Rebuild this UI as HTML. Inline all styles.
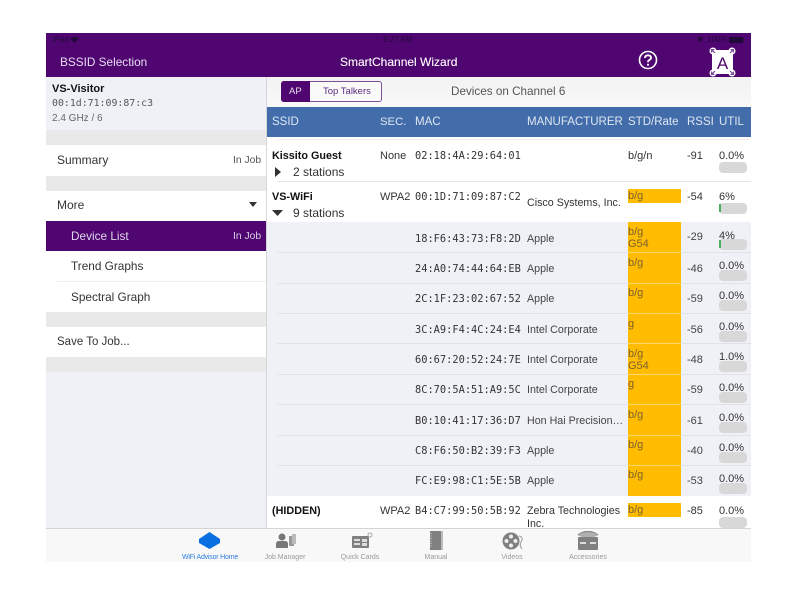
<!DOCTYPE html>
<html><head><meta charset="utf-8"><style>
html,body{margin:0;padding:0;background:#fff;width:800px;height:600px;overflow:hidden}
body{font-family:"Liberation Sans",sans-serif;color:#222;position:relative}
#a{position:absolute;left:46px;top:33px;width:705px;height:529px;overflow:hidden;background:#eff1f6}
.w{position:absolute;left:-46px;top:-33px;width:800px;height:600px;filter:blur(.35px)}
.b{position:absolute}
.t{position:absolute;white-space:nowrap;line-height:14px;font-size:11px}
.m{font-family:"DejaVu Sans Mono",monospace;font-size:10.350px;color:#333}
.n{font-size:10.700px}
.y{position:absolute;left:628px;width:53px;background:#ffbc00}
.s{color:#7a6230;font-size:11px}
.g{position:absolute;left:719px;width:28px;height:10.500px;background:#d8d8d8;border-radius:4px}
.l{position:absolute;height:1px;background:#e4e4e8}
.yl{position:absolute;left:628px;width:53px;height:1px;background:#ffd76a}
.tb{position:absolute;font-size:7px;color:#9a9a9a;white-space:nowrap;line-height:9px;text-align:center;width:80px;top:553px}
</style></head><body><div id="a"><div class="w">
<div class="b" style="left:46px;top:33px;width:705px;height:44px;background:#4f0670"></div>
<div class="t" style="left:53px;top:33px;font-size:8px;color:#240a3c">iPad</div>
<svg class="b" style="left:70px;top:36px" width="9" height="7" viewBox="0 0 9 7"><path d="M4.500 7L0 2.500Q4.500-1 9 2.500Z" fill="#240a3c"/></svg>
<div class="t" style="left:383px;top:33px;font-size:8px;color:#240a3c">8:27 AM</div>
<div class="t" style="left:697px;top:33px;font-size:8px;color:#240a3c">✱</div>
<div class="t" style="left:707px;top:33px;font-size:8px;color:#240a3c">100%</div>
<div class="b" style="left:729px;top:37px;width:14px;height:6px;background:#22083a"></div>
<div class="b" style="left:743px;top:39px;width:1px;height:2px;background:#22083a"></div>
<div class="t" style="left:60px;top:55px;font-size:11.800px;color:#e6dcef">BSSID Selection</div>
<div class="t" style="left:340px;top:55px;font-size:12px;color:#fff;-webkit-text-stroke:.1px #fff">SmartChannel Wizard</div>
<svg class="b" style="left:638px;top:50px" width="20" height="20" viewBox="0 0 20 20"><circle cx="10" cy="10" r="8.500" fill="none" stroke="#fff" stroke-width="1.600"/><path d="M7 8Q7 5.300 10 5.300Q13 5.300 13 7.800Q13 9.300 11 10.200Q10 10.700 10 12.200" fill="none" stroke="#fff" stroke-width="1.800"/><circle cx="10" cy="14.700" r="1.100" fill="#fff"/></svg>
<svg class="b" style="left:708px;top:46px" width="28" height="31" viewBox="0 0 28 31"><rect x="4" y="4" width="21" height="24" fill="#fff"/><g fill="#fff"><circle cx="5" cy="5" r="3.500"/><circle cx="24" cy="5" r="3.500"/><circle cx="5" cy="27" r="3.500"/><circle cx="24" cy="27" r="3.500"/></g><g fill="#7b4a98"><path d="M3 3H7L3 7Z"/><path d="M26 3H22L26 7Z"/><path d="M3 29H7L3 25Z"/><path d="M26 29H22L26 25Z"/></g><path d="M4 4L7 7M25 4L22 7M4 28L7 25M25 28L22 25" stroke="#7b4a98" stroke-width="1.200"/><text x="14.500" y="23" font-family="Liberation Sans" font-size="17" text-anchor="middle" fill="#4f0670">A</text></svg>

<div class="b" style="left:46px;top:77px;width:221px;height:53px;background:#eff1f6"></div>
<div class="t" style="left:52px;top:82px;font-weight:700;color:#111">VS-Visitor</div>
<div class="t m" style="left:52px;top:97px;font-size:9.900px;color:#555">00:1d:71:09:87:c3</div>
<div class="t" style="left:52px;top:112px;font-size:10px;color:#666">2.4 GHz / 6</div>
<div class="b" style="left:46px;top:130px;width:221px;height:15px;background:#e9e9e9"></div>
<div class="b" style="left:46px;top:145px;width:221px;height:31px;background:#fff"></div>
<div class="t" style="left:57px;top:153px;font-size:12px;color:#333">Summary</div>
<div class="t" style="left:233px;top:154px;color:#555;font-size:10.300px">In Job</div>
<div class="b" style="left:46px;top:176px;width:221px;height:15px;background:#e9e9e9"></div>
<div class="b" style="left:46px;top:191px;width:221px;height:121px;background:#fff"></div>
<div class="t" style="left:57px;top:198px;font-size:12px;color:#333">More</div>
<svg class="b" style="left:248px;top:202px" width="10" height="6"><path d="M1 0H9L5 5Z" fill="#333"/></svg>
<div class="b" style="left:46px;top:221px;width:221px;height:30px;background:#4f0670"></div>
<div class="t" style="left:71px;top:229px;font-size:11.800px;color:#e0d5ea">Device List</div>
<div class="t" style="left:233px;top:230px;color:#d9cfe4;font-size:10.300px">In Job</div>
<div class="t" style="left:71px;top:259px;font-size:11.800px;color:#333">Trend Graphs</div>
<div class="l" style="left:57px;top:281px;width:210px;background:#eee"></div>
<div class="t" style="left:71px;top:290px;font-size:11.800px;color:#333">Spectral Graph</div>
<div class="b" style="left:46px;top:312px;width:221px;height:15px;background:#e9e9e9"></div>
<div class="b" style="left:46px;top:327px;width:221px;height:30px;background:#fff"></div>
<div class="t" style="left:57px;top:335px;color:#333;font-size:11.500px">Save To Job...</div>
<div class="b" style="left:46px;top:357px;width:221px;height:15px;background:#e9e9e9"></div>
<div class="b" style="left:266px;top:77px;width:1px;height:451px;background:#d4d6da"></div>

<div class="b" style="left:267px;top:77px;width:484px;height:30px;background:linear-gradient(#f2f2f2,#f9f9f9)"></div>
<div class="b" style="left:281px;top:81px;width:101px;height:21px;border:1px solid #7c4f96;border-radius:3px;box-sizing:border-box;background:#fafafa"></div>
<div class="b" style="left:281px;top:81px;width:29px;height:21px;background:#4f0670;border-radius:3px 0 0 3px"></div>
<div class="t" style="left:289px;top:85px;font-size:9.500px;color:#e8def0">AP</div>
<div class="t" style="left:323px;top:85px;font-size:9.500px;color:#5c2a80">Top Talkers</div>
<div class="t" style="left:451px;top:85px;font-size:11.700px;color:#555">Devices on Channel 6</div>

<div class="b" style="left:267px;top:107px;width:484px;height:30px;background:#426daa"></div>
<div class="t" style="left:272px;top:115px;font-size:11.500px;color:#dfe7f2">SSID</div>
<div class="t" style="left:380px;top:115px;font-size:11.300px;color:#dfe7f2">SEC.</div>
<div class="t" style="left:415px;top:115px;font-size:11.500px;color:#dfe7f2">MAC</div>
<div class="t" style="left:527px;top:115px;font-size:11.500px;color:#dfe7f2">MANUFACTURER</div>
<div class="t" style="left:628px;top:115px;font-size:11.500px;color:#dfe7f2">STD/Rate</div>
<div class="t" style="left:687px;top:115px;font-size:11.500px;color:#dfe7f2">RSSI</div>
<div class="t" style="left:719px;top:115px;font-size:11.500px;color:#dfe7f2">UTIL</div>

<div class="b" style="left:267px;top:137px;width:484px;height:85px;background:#fff"></div>
<div class="l" style="left:277px;top:139px;width:474px;background:#f0f0f0"></div>
<div class="t" style="left:272px;top:149px;font-weight:700;color:#111;font-size:10.800px">Kissito Guest</div>
<svg class="b" style="left:275px;top:167px" width="6" height="10"><path d="M0 0L6 5L0 10Z" fill="#333"/></svg>
<div class="t" style="left:293px;top:165px;font-size:12px;color:#333">2 stations</div>
<div class="t" style="left:380px;top:149px;color:#333">None</div>
<div class="t m" style="left:415px;top:149px">02:18:4A:29:64:01</div>
<div class="t" style="left:628px;top:149px;color:#333">b/g/n</div>
<div class="t" style="left:687px;top:149px;color:#333">-91</div>
<div class="t" style="left:719px;top:149px;color:#333">0.0%</div>
<div class="g" style="top:162px"></div>
<div class="l" style="left:277px;top:181px;width:474px"></div>

<div class="t" style="left:272px;top:190px;font-weight:700;color:#111;font-size:10.800px">VS-WiFi</div>
<svg class="b" style="left:272px;top:210px" width="11" height="7"><path d="M0 0H11L5.500 6Z" fill="#333"/></svg>
<div class="t" style="left:293px;top:206px;font-size:12px;color:#333">9 stations</div>
<div class="t" style="left:380px;top:190px;color:#333">WPA2</div>
<div class="t m" style="left:415px;top:190px">00:1D:71:09:87:C2</div>
<div class="t n" style="left:527px;top:196px;color:#333">Cisco Systems, Inc.</div>
<div class="y" style="top:189px;height:14px"></div>
<div class="t s" style="left:628px;top:189px;color:#7a6230">b/g</div>
<div class="t" style="left:687px;top:190px;color:#333">-54</div>
<div class="t" style="left:719px;top:190px;color:#333;font-size:11px">6%</div>
<div class="g" style="top:203px"></div>
<div class="b" style="left:719px;top:204px;width:2px;height:8px;background:#4caf60"></div>

<div class="b" style="left:267px;top:222px;width:484px;height:274px;background:#eff1f6"></div>
<div class="y" style="top:222px;height:274px"></div>
<div class="l" style="left:277px;top:252px;width:474px;background:#e0e2e8"></div>
<div class="l" style="left:277px;top:283px;width:474px;background:#e0e2e8"></div>
<div class="l" style="left:277px;top:313px;width:474px;background:#e0e2e8"></div>
<div class="l" style="left:277px;top:343px;width:474px;background:#e0e2e8"></div>
<div class="l" style="left:277px;top:374px;width:474px;background:#e0e2e8"></div>
<div class="l" style="left:277px;top:404px;width:474px;background:#e0e2e8"></div>
<div class="l" style="left:277px;top:435px;width:474px;background:#e0e2e8"></div>
<div class="l" style="left:277px;top:465px;width:474px;background:#e0e2e8"></div>
<div class="yl" style="top:252px"></div><div class="yl" style="top:283px"></div><div class="yl" style="top:313px"></div><div class="yl" style="top:343px"></div><div class="yl" style="top:374px"></div><div class="yl" style="top:404px"></div><div class="yl" style="top:435px"></div><div class="yl" style="top:465px"></div>

<div class="t m" style="left:415px;top:232px">18:F6:43:73:F8:2D</div><div class="t n" style="left:527px;top:232px;color:#444">Apple</div><div class="t s" style="left:628px;top:226px;line-height:12px;white-space:normal;width:30px">b/g<br>G54</div><div class="t" style="left:687px;top:230px;color:#444">-29</div><div class="t" style="left:719px;top:229px;color:#333">4%</div><div class="g" style="top:239px"></div><div class="b" style="left:719px;top:240px;width:2px;height:8px;background:#4caf60"></div>

<div class="t m" style="left:415px;top:262px">24:A0:74:44:64:EB</div><div class="t n" style="left:527px;top:262px;color:#444">Apple</div><div class="t s" style="left:628px;top:256px">b/g</div><div class="t" style="left:687px;top:262px;color:#444">-46</div><div class="t" style="left:719px;top:259px;color:#333">0.0%</div><div class="g" style="top:270px"></div>

<div class="t m" style="left:415px;top:292px">2C:1F:23:02:67:52</div><div class="t n" style="left:527px;top:292px;color:#444">Apple</div><div class="t s" style="left:628px;top:286px">b/g</div><div class="t" style="left:687px;top:292px;color:#444">-59</div><div class="t" style="left:719px;top:289px;color:#333">0.0%</div><div class="g" style="top:300px"></div>

<div class="t m" style="left:415px;top:323px">3C:A9:F4:4C:24:E4</div><div class="t n" style="left:527px;top:323px;color:#444">Intel Corporate</div><div class="t s" style="left:628px;top:317px">g</div><div class="t" style="left:687px;top:323px;color:#444">-56</div><div class="t" style="left:719px;top:320px;color:#333">0.0%</div><div class="g" style="top:331px"></div>

<div class="t m" style="left:415px;top:353px">60:67:20:52:24:7E</div><div class="t n" style="left:527px;top:353px;color:#444">Intel Corporate</div><div class="t s" style="left:628px;top:348px;line-height:12px;white-space:normal;width:30px">b/g<br>G54</div><div class="t" style="left:687px;top:353px;color:#444">-48</div><div class="t" style="left:719px;top:350px;color:#333">1.0%</div><div class="g" style="top:361px"></div>

<div class="t m" style="left:415px;top:383px">8C:70:5A:51:A9:5C</div><div class="t n" style="left:527px;top:383px;color:#444">Intel Corporate</div><div class="t s" style="left:628px;top:377px">g</div><div class="t" style="left:687px;top:383px;color:#444">-59</div><div class="t" style="left:719px;top:381px;color:#333">0.0%</div><div class="g" style="top:392px"></div>

<div class="t m" style="left:415px;top:414px">B0:10:41:17:36:D7</div><div class="t n" style="left:527px;top:414px;color:#444">Hon Hai Precision…</div><div class="t s" style="left:628px;top:408px">b/g</div><div class="t" style="left:687px;top:414px;color:#444">-61</div><div class="t" style="left:719px;top:411px;color:#333">0.0%</div><div class="g" style="top:422px"></div>

<div class="t m" style="left:415px;top:444px">C8:F6:50:B2:39:F3</div><div class="t n" style="left:527px;top:444px;color:#444">Apple</div><div class="t s" style="left:628px;top:438px">b/g</div><div class="t" style="left:687px;top:444px;color:#444">-40</div><div class="t" style="left:719px;top:441px;color:#333">0.0%</div><div class="g" style="top:452px"></div>

<div class="t m" style="left:415px;top:474px">FC:E9:98:C1:5E:5B</div><div class="t n" style="left:527px;top:474px;color:#444">Apple</div><div class="t s" style="left:628px;top:468px">b/g</div><div class="t" style="left:687px;top:474px;color:#444">-53</div><div class="t" style="left:719px;top:472px;color:#333">0.0%</div><div class="g" style="top:483px"></div>

<div class="b" style="left:267px;top:496px;width:484px;height:32px;background:#fff"></div>
<div class="t" style="left:272px;top:504px;font-weight:700;color:#111;font-size:10.800px">(HIDDEN)</div>
<div class="t" style="left:380px;top:504px;color:#333">WPA2</div>
<div class="t m" style="left:415px;top:504px">B4:C7:99:50:5B:92</div>
<div class="t n" style="left:527px;top:504px;color:#333">Zebra Technologies</div>
<div class="t n" style="left:527px;top:517px;color:#333">Inc.</div>
<div class="y" style="top:503px;height:14px"></div>
<div class="t s" style="left:628px;top:503px">b/g</div>
<div class="t" style="left:687px;top:504px;color:#333">-85</div>
<div class="t" style="left:719px;top:504px;color:#333">0.0%</div>
<div class="g" style="top:517px"></div>

<div class="b" style="left:46px;top:528px;width:705px;height:34px;background:#f8f8f8;border-top:1px solid #d4d4d4;box-sizing:border-box"></div>
<svg class="b" style="left:199px;top:532px" width="21" height="17"><path d="M10.500 0L21 7V11L10.500 17L0 11V7Z" fill="#0a6fe0"/></svg>
<div class="tb" style="left:170px;color:#2f7de0;letter-spacing:-.2px">WiFi Advisor Home</div>
<svg class="b" style="left:275px;top:533px" width="22" height="16"><circle cx="7" cy="4" r="3.500" fill="#777"/><path d="M1 15V11Q1 8 4 8H10Q13 8 13 11V15Z" fill="#777"/><rect x="14" y="3" width="5" height="10" fill="#999"/><rect x="17" y="1" width="4" height="10" fill="#bbb"/></svg>
<div class="tb" style="left:245px">Job Manager</div>
<svg class="b" style="left:351px;top:532px" width="22" height="17"><rect x="1" y="4" width="17" height="12" rx="1" fill="#808080"/><rect x="3" y="7" width="6" height="2" fill="#ddd"/><rect x="3" y="11" width="6" height="2" fill="#ddd"/><rect x="11" y="7" width="5" height="3" fill="#ddd"/><rect x="11" y="11" width="5" height="3" fill="#ddd"/><circle cx="19" cy="3" r="2" fill="none" stroke="#aaa"/></svg>
<div class="tb" style="left:320px">Quick Cards</div>
<svg class="b" style="left:429px;top:531px" width="15" height="19"><rect x="1" y="0" width="13" height="19" fill="#808080"/><path d="M2 2V17" stroke="#ddd" stroke-dasharray="1 1.500" fill="none"/><rect x="12" y="0" width="2" height="19" fill="#bbb"/></svg>
<div class="tb" style="left:396px">Manual</div>
<svg class="b" style="left:501px;top:532px" width="24" height="18"><circle cx="10" cy="9" r="8.500" fill="#808080"/><g fill="#eee"><circle cx="10" cy="4.500" r="2"/><circle cx="10" cy="13.500" r="2"/><circle cx="5.500" cy="9" r="2"/><circle cx="14.500" cy="9" r="2"/></g><path d="M18 4Q23 5 20 10Q18 13 21 17" fill="none" stroke="#999"/></svg>
<div class="tb" style="left:472px">Videos</div>
<svg class="b" style="left:577px;top:531px" width="22" height="19"><path d="M1 4Q11 -3 21 4" fill="none" stroke="#888" stroke-width="1.500"/><ellipse cx="11" cy="4" rx="9.500" ry="2.500" fill="#b0b0b0"/><rect x="1" y="6" width="20" height="13" rx="1" fill="#808080"/><rect x="3" y="11" width="6" height="2" fill="#ddd"/><rect x="13" y="11" width="6" height="2" fill="#ddd"/></svg>
<div class="tb" style="left:548px">Accessories</div>
</div></div></body></html>
